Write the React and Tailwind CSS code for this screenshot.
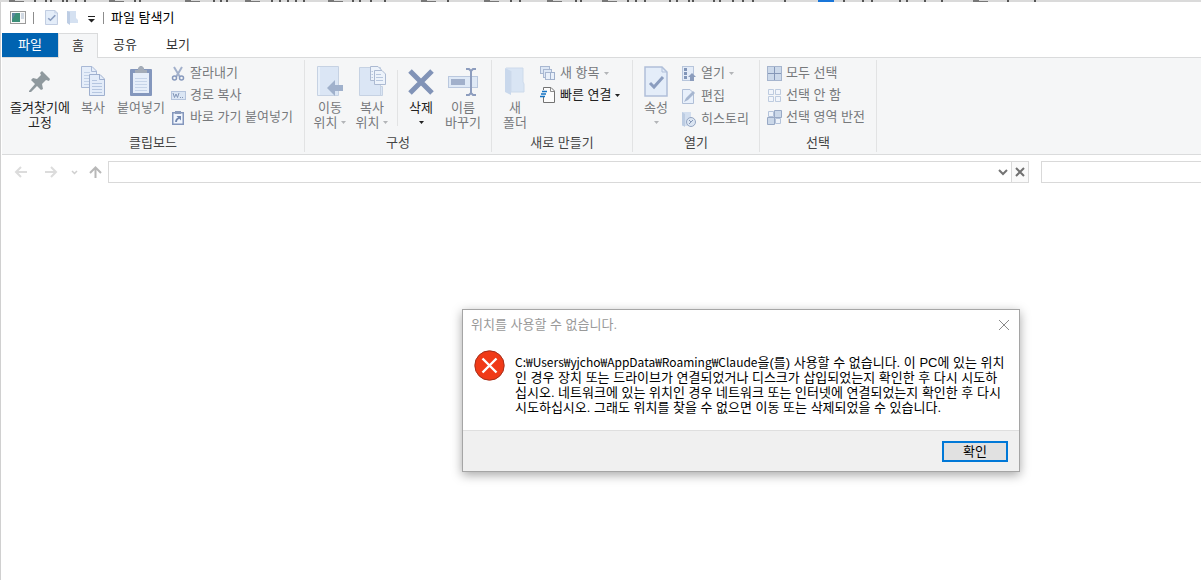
import React, { useState } from 'react';

const Svg = ({ w, h, children }) => (
    <svg width={w} height={h} viewBox={`0 0 ${w} ${h}`} fill="none" className="shrink-0" aria-hidden="true">
        {children}
    </svg>
);

const PinIcon = () => (
    <Svg w={22} h={24}>
        <path d="M13 1L21 9L20 11L17 10L13 14L14 19L12 20L8 16L2 22L0 22L0 21L6 14L2 10L4 8L8 9L12 5L11 3Z" fill="#8f999e" />
    </Svg>
);

const CopyIcon = () => (
    <Svg w={26} h={31}>
        <path d="M1.500 .5H12L16.500 5V21.500H1.500Z" fill="#e6eefa" stroke="#a9b9d6" />
        <path d="M11.500 1V5.500H16" stroke="#a9b9d6" />
        <path d="M4 6.500H10M4 9.500H14M4 12.500H14M4 15.500H14M4 18.500H14" stroke="#c3d2e8" />
        <path d="M9.500 8.500H20L24.500 13V29.500H9.500Z" fill="#e3ecf9" stroke="#9fb0cf" />
        <path d="M19.500 9V13.500H24" stroke="#9fb0cf" />
        <path d="M12 14.500H17M12 17.500H22M12 20.500H22M12 23.500H22M12 26.500H22" stroke="#b5c6e0" />
    </Svg>
);

const PasteIcon = () => (
    <Svg w={22} h={31}>
        <rect x="0" y="3" width="22" height="27" rx="1" fill="#8497bd" />
        <rect x="3" y="7" width="16" height="20" fill="#e6eefa" />
        <path d="M5 12.500H17M5 15.500H17M5 18.500H17M5 21.500H17M5 24.500H17" stroke="#c6d4e9" />
        <path d="M5 4H8V2L10 0H12L14 2V4H17V7H5Z" fill="#a4acb8" />
    </Svg>
);

const CutIcon = () => (
    <Svg w={14} h={15}>
        <path d="M3 1L9 11M11 1L5 11" stroke="#a2b0cb" strokeWidth="2" />
        <circle cx="3.500" cy="12" r="2" stroke="#8799bd" strokeWidth="1.500" />
        <circle cx="10.500" cy="12" r="2" stroke="#8799bd" strokeWidth="1.500" />
    </Svg>
);

const PathIcon = () => (
    <Svg w={15} h={9}>
        <rect x=".5" y=".5" width="14" height="8" fill="#dbe6f4" stroke="#b5c4dc" />
        <path d="M2 2L3.500 6.500L5 3L6.500 6.500L8 2M9 6.500H10M11 6.500H12" stroke="#8497b8" />
    </Svg>
);

const ShortcutIcon = () => (
    <Svg w={12} h={15}>
        <rect x=".75" y="2.750" width="10.500" height="11.500" fill="#f1f6fd" stroke="#8497bd" strokeWidth="1.500" />
        <path d="M3 1H9V4H3Z" fill="#8d9dbd" />
        <path d="M4 12Q4 9 7 8" stroke="#7287b0" strokeWidth="1.800" />
        <path d="M4.500 6H9V10.500Z" fill="#7287b0" />
    </Svg>
);

const MoveToIcon = () => (
    <Svg w={28} h={31}>
        <path d="M1.500 .5H22.500V29.500H1.500Z" fill="#dbe6f5" stroke="#c6d2e3" />
        <path d="M3 1V29" stroke="#e8f0fa" strokeWidth="2" />
        <path d="M11 22L19 14V19H27V25H19V30Z" fill="#a0b1cc" />
    </Svg>
);

const CopyToIcon = () => (
    <Svg w={28} h={31}>
        <path d="M1.500 1.500H22.500V20.500H24.500V29.500H1.500Z" fill="#dbe6f5" stroke="#c6d2e3" />
        <path d="M22.500 20V30" stroke="#c6d2e3" />
        <path d="M12.500 .5H20L23.500 4V14.500H12.500Z" fill="#edf3fb" stroke="#acbad2" />
        <path d="M16.500 4.500H24L27.500 8V18.500H16.500Z" fill="#edf3fb" stroke="#acbad2" />
        <path d="M18 8.500H23M18 11.500H25M18 14.500H25M13.500 5.500H15M13.500 8.500H15M13.500 11.500H15" stroke="#b8c7de" />
    </Svg>
);

const DeleteIcon = () => (
    <Svg w={26} h={26}>
        <path d="M2 2L24 24M24 2L2 24" stroke="#8193b7" strokeWidth="5" />
    </Svg>
);

const RenameIcon = () => (
    <Svg w={30} h={28}>
        <rect x=".5" y="8.500" width="29" height="11" fill="#dfe9f6" stroke="#bac8de" />
        <rect x="3" y="11" width="14" height="6" fill="#a1b0cb" />
        <path d="M18 1H21L23 3L25 1H28M18 27H21L23 25L25 27H28M23 3V25" stroke="#8d9dbe" strokeWidth="2" />
    </Svg>
);

const FolderIcon = () => (
    <Svg w={20} h={29}>
        <path d="M1 1H18V15L19 17V25H1Z" fill="#d9e5f4" />
        <path d="M0 1L6 4V28L0 25Z" fill="#c9d8ec" />
        <path d="M6 4V25H19V17L18 15V1H1" stroke="#cddaeb" />
    </Svg>
);

const NewItemIcon = () => (
    <Svg w={16} h={15}>
        <rect x=".5" y=".5" width="9" height="7" fill="#dde7f5" stroke="#a8b7d1" />
        <rect x="3.500" y="3.500" width="8" height="8" fill="#dde7f5" stroke="#a8b7d1" />
        <rect x="5.500" y="6.500" width="5" height="7" fill="#e9f0fa" stroke="#a8b7d1" />
        <rect x="10.500" y="6.500" width="4" height="7" fill="#e9f0fa" stroke="#9fb0cc" />
    </Svg>
);

const EasyAccessIcon = () => (
    <Svg w={16} h={17}>
        <path d="M3.500 .5H11L14.500 4V15.500H3.500Z" fill="#fcfcfc" stroke="#737373" />
        <path d="M10.500 .5V4.500H14.500" stroke="#8b8b8b" />
        <path d="M2 3H5V10H2Z" fill="#f5f6f7" />
        <path d="M2 4.500H7M1 7H6M0 9.500H5" stroke="#1674c4" strokeWidth="1.500" />
    </Svg>
);

const PropertiesIcon = ({ w = 24, h = 31 }) => (
    <svg width={w} height={h} viewBox="0 0 24 31" preserveAspectRatio="none" fill="none" aria-hidden="true">
        <path d="M1 1H18L23 6V30H1Z" fill="#e4edf9" stroke="#b0bfd9" strokeWidth="1.500" />
        <path d="M18 1V6H23" stroke="#b0bfd9" />
        <path d="M6 17L10 21L19 11" stroke="#8b9dbf" strokeWidth="3" />
    </svg>
);

const OpenIcon = () => (
    <Svg w={14} h={15}>
        <rect x=".5" y=".5" width="11" height="14" fill="#e4ecf8" stroke="#b7c5db" />
        <path d="M2 2H5V5H2ZM2 6H5V9H2ZM2 10H5V13H2Z" fill="#8195b8" />
        <path d="M6 11L10 7L14 11H12V15H8V11Z" fill="#8b9cbc" />
    </Svg>
);

const EditIcon = () => (
    <Svg w={14} h={15}>
        <path d="M.5 .5H8L11.500 4V14.500H.5Z" fill="#e8f0fb" stroke="#b0bfd7" />
        <path d="M2 13L4 9L11 2L13 4L6 11Z" fill="#a6b6d0" />
    </Svg>
);

const HistoryIcon = () => (
    <Svg w={14} h={15}>
        <path d="M0 0H9V8H6V14H0Z" fill="#d3dfef" />
        <path d="M0 0L3 2V15L0 13Z" fill="#bccce2" />
        <circle cx="9" cy="10" r="4.500" fill="#dbe5f2" stroke="#94a5c2" />
        <path d="M7 8L9 10L11 8M9 10L7 12" stroke="#8798b7" />
    </Svg>
);

const SelectAllIcon = () => (
    <Svg w={15} h={15}>
        <rect width="15" height="15" fill="#a6b5ce" />
        <path d="M1 1H7V7H1ZM8 1H14V7H8ZM1 8H7V14H1ZM8 8H14V14H8Z" fill="#ccd9ea" />
        <path d="M7.500 1V14M1 7.500H14" stroke="#8698b8" />
    </Svg>
);

const SelectNoneIcon = () => (
    <Svg w={15} h={15}>
        <path d="M1.500 1.500H6.500V6.500H1.500ZM8.500 1.500H13.500V6.500H8.500ZM1.500 8.500H6.500V13.500H1.500ZM8.500 8.500H13.500V13.500H8.500Z" fill="#f1f5fb" stroke="#bdcbdf" />
    </Svg>
);

const InvertIcon = () => (
    <Svg w={15} h={15}>
        <path d="M1.500 1.500H6.500V6.500H1.500ZM8.500 8.500H13.500V13.500H8.500Z" fill="#eef3fa" stroke="#b4c3da" />
        <path d="M7.500 .5H14.500V7.500H7.500ZM.5 7.500H7.500V14.500H.5Z" fill="#cbd8e9" stroke="#98a9c5" />
    </Svg>
);

const Caret = ({ dark }) => (
    <svg width="5" height="3" viewBox="0 0 5 3" className="shrink-0" aria-hidden="true">
        <path d="M0 0H5L2.500 3Z" fill={dark ? '#222' : '#b3b5b8'} />
    </svg>
);

const BigButton = ({ icon, lines, width, caret, dark }) => (
    <button className={`flex flex-col items-center leading-[15px] ${width} ${dark ? 'text-[#222]' : 'text-[#77797c]'}`}>
        <span className="flex h-[34px] items-center justify-center pb-[3px]">{icon}</span>
        {lines.map((line, i) => (
            <span key={line} className="flex items-center gap-1 whitespace-nowrap">
                {line}
                {caret === 'inline' && i === lines.length - 1 && <Caret dark={dark} />}
            </span>
        ))}
        {caret === 'below' && <span className="flex h-[15px] items-center"><Caret dark={dark} /></span>}
    </button>
);

const SmallButton = ({ icon, label, caret, dark }) => (
    <button className={`flex h-[22px] items-center gap-1 whitespace-nowrap ${dark ? 'text-[#222]' : 'text-[#77797c]'}`}>
        <span className="flex w-4 justify-center">{icon}</span>
        {label}
        {caret && <Caret dark={dark} />}
    </button>
);

const Group = ({ title, width, children }) => (
    <section className={`flex shrink-0 flex-col border-r border-[#e2e3e4] ${width}`}>
        <div className="flex h-[75px]">{children}</div>
        <h2 className="text-center leading-[15px] text-[#444]">{title}</h2>
    </section>
);

// Folder tabs of the window behind, only the lowest two rows stay visible
const folderMarks = [9, 109, 185, 245, 328, 421, 484, 547, 602, 973];
const textMarks = [34, 45, 50, 62, 66, 75, 84, 134, 139, 213, 220, 226, 271, 279, 287, 295, 303, 352, 359, 370, 384, 447, 510, 519, 575, 580, 627, 635, 644, 669, 676, 688, 692, 713, 719, 732, 742, 752, 784, 843, 862, 871, 899, 906, 924, 941, 1007, 1034];

const BehindStrip = () => (
    <svg width="100%" height="2" className="block bg-[#dadada]" aria-hidden="true">
        {folderMarks.map((x) => (
            <path key={x} d={`M${x} 0H${x + 6}V1H${x + 15}V2H${x}Z`} fill="#777" />
        ))}
        {textMarks.map((x) => (
            <rect key={x} x={x} y="0" width="2" height="2" fill="#555" />
        ))}
        <rect x="818" y="0" width="16" height="2" fill="#1976d9" />
    </svg>
);

const TitleBar = () => (
    <header className="flex h-[31px] items-center pl-2">
        <Svg w={16} h={13}>
            <rect x=".5" y=".5" width="15" height="12" fill="#fafafa" stroke="#9a9a9a" />
            <rect x="2" y="2" width="8" height="9" fill="#3c8f78" />
            <path d="M2 2H6L2 9Z" fill="#5d87a0" />
            <path d="M11 3H14M11 5H14M11 7H14" stroke="#a7b7cb" />
        </Svg>
        <span className="ml-[7px] h-3 w-px bg-[#8c8c8c]" />
        <button aria-label="속성" className="ml-[11px]"><PropertiesIcon w={13} h={15} /></button>
        <button aria-label="새 폴더" className="ml-[9px]">
            <Svg w={11} h={15}>
                <path d="M0 1H9V8L11 10V13H0Z" fill="#d5e1f1" />
                <path d="M0 1L3 2V15L0 13Z" fill="#bdcde4" />
            </Svg>
        </button>
        <button aria-label="빠른 실행 도구 모음 사용자 지정" className="ml-[10px] pt-1">
            <Svg w={7} h={7}>
                <path d="M0 .5H7" stroke="#222" />
                <path d="M0 3H7L3.500 6.500Z" fill="#222" />
            </Svg>
        </button>
        <span className="ml-2 h-3 w-px bg-[#8c8c8c]" />
        <h1 className="ml-[7px] text-black">파일 탐색기</h1>
    </header>
);

const Tabs = () => (
    <nav className="flex h-6 text-[#333]">
        <button className="w-14 bg-[#0063b1] text-white">파일</button>
        <button className="relative z-10 -mb-px w-10 border border-b-0 border-[#dadbdc] bg-[#f5f6f7]">홈</button>
        <button className="w-[54px]">공유</button>
        <button className="w-[52px]">보기</button>
    </nav>
);

const Ribbon = () => (
    <div className="flex h-[98px] border-y border-[#dadbdc] bg-[#f5f6f7] pt-[2px] pb-[2px]">
        <Group title="클립보드" width="w-[303px]">
            <div className="flex pt-[6px] pl-[6px]">
                <BigButton icon={<PinIcon />} lines={['즐겨찾기에', '고정']} width="w-16" dark />
                <BigButton icon={<CopyIcon />} lines={['복사']} width="w-[42px]" />
                <BigButton icon={<PasteIcon />} lines={['붙여넣기']} width="w-[54px]" />
            </div>
            <div className="ml-[2px] pt-[2px]">
                <SmallButton icon={<CutIcon />} label="잘라내기" />
                <SmallButton icon={<PathIcon />} label="경로 복사" />
                <SmallButton icon={<ShortcutIcon />} label="바로 가기 붙여넣기" />
            </div>
        </Group>
        <Group title="구성" width="w-[187px]">
            <div className="flex pt-[6px] pl-1">
                <BigButton icon={<MoveToIcon />} lines={['이동', '위치']} width="w-[42px]" caret="inline" />
                <BigButton icon={<CopyToIcon />} lines={['복사', '위치']} width="w-[42px]" caret="inline" />
                <span className="mt-1 ml-1 h-14 w-px bg-[#e2e3e4]" />
                <BigButton icon={<DeleteIcon />} lines={['삭제']} width="w-[46px]" caret="below" dark />
                <BigButton icon={<RenameIcon />} lines={['이름', '바꾸기']} width="w-[38px]" />
            </div>
        </Group>
        <Group title="새로 만들기" width="w-[141px]">
            <div className="flex pt-[6px] pl-[2px]">
                <BigButton icon={<FolderIcon />} lines={['새', '폴더']} width="w-[42px]" />
            </div>
            <div className="ml-1 pt-[2px]">
                <SmallButton icon={<NewItemIcon />} label="새 항목" caret />
                <SmallButton icon={<EasyAccessIcon />} label="빠른 연결" caret dark />
            </div>
        </Group>
        <Group title="열기" width="w-[127px]">
            <div className="flex pt-[6px] pl-[2px]">
                <BigButton icon={<PropertiesIcon />} lines={['속성']} width="w-[42px]" caret="below" />
            </div>
            <div className="ml-1 flex flex-col gap-px pt-[2px]">
                <SmallButton icon={<OpenIcon />} label="열기" caret />
                <SmallButton icon={<EditIcon />} label="편집" />
                <SmallButton icon={<HistoryIcon />} label="히스토리" />
            </div>
        </Group>
        <Group title="선택" width="w-[117px]">
            <div className="ml-[6px] pt-[2px]">
                <SmallButton icon={<SelectAllIcon />} label="모두 선택" />
                <SmallButton icon={<SelectNoneIcon />} label="선택 안 함" />
                <SmallButton icon={<InvertIcon />} label="선택 영역 반전" />
            </div>
        </Group>
    </div>
);

const AddressBar = () => {
    const [path, setPath] = useState('');
    const [query, setQuery] = useState('');

    return (
        <div className="flex items-center pt-[6px] pl-[13px]">
            <button aria-label="뒤로">
                <Svg w={14} h={12}>
                    <path d="M13 6H2M7 1L2 6L7 11" stroke="#dcdcdc" strokeWidth="2" />
                </Svg>
            </button>
            <button aria-label="앞으로" className="ml-4">
                <Svg w={14} h={12}>
                    <path d="M1 6H12M7 1L12 6L7 11" stroke="#dcdcdc" strokeWidth="2" />
                </Svg>
            </button>
            <button aria-label="최근 위치" className="ml-[13px]">
                <Svg w={7} h={5}>
                    <path d="M1 1L3.500 3.500L6 1" stroke="#cfcfcf" strokeWidth="1.500" />
                </Svg>
            </button>
            <button aria-label="위로" className="ml-[11px]">
                <Svg w={13} h={13}>
                    <path d="M6.500 12V2M1 7L6.500 1.500L12 7" stroke="#b8b8b8" strokeWidth="2" />
                </Svg>
            </button>
            <div className="ml-[6px] flex h-[22px] flex-1 border border-[#d9d9d9]">
                <input aria-label="주소" value={path} onChange={(e) => setPath(e.target.value)} className="min-w-0 flex-1 px-1 outline-none" />
                <button aria-label="이전 위치" className="flex w-[16px] items-center justify-center">
                    <Svg w={10} h={7}>
                        <path d="M1 1L5 5L9 1" stroke="#747474" strokeWidth="2" />
                    </Svg>
                </button>
                <button aria-label="중지" className="flex w-[17px] items-center justify-center border-l border-[#d9d9d9] bg-[#fafafa]">
                    <Svg w={10} h={10}>
                        <path d="M1 1L9 9M9 1L1 9" stroke="#707070" strokeWidth="2" />
                    </Svg>
                </button>
            </div>
            <input aria-label="검색" value={query} onChange={(e) => setQuery(e.target.value)} className="ml-3 h-[22px] w-40 border border-r-0 border-[#d9d9d9] px-1 outline-none" />
        </div>
    );
};

const ErrorDialog = ({ onClose }) => (
    <div role="alertdialog" aria-labelledby="dialog-title" aria-describedby="dialog-message" className="absolute top-[309px] left-[462px] w-[558px] border border-[#a5a5a5] bg-white shadow-[0_3px_10px_rgba(0,0,0,0.35)]">
        <div className="flex h-[29px] items-center justify-between pr-[9px] pl-2">
            <h2 id="dialog-title" className="text-[#999]">위치를 사용할 수 없습니다.</h2>
            <button aria-label="닫기" onClick={onClose}>
                <Svg w={12} h={12}>
                    <path d="M1 1L11 11M11 1L1 11" stroke="#8a8a8a" />
                </Svg>
            </button>
        </div>
        <div className="flex gap-[10px] pt-[11px] pb-[15px] pl-[11px]">
            <Svg w={31} h={31}>
                <circle cx="15.500" cy="15.500" r="14.700" fill="#f03a17" stroke="#a52f1b" />
                <path d="M8.500 8.500L22.500 22.500M22.500 8.500L8.500 22.500" stroke="#fff" strokeWidth="2.400" />
            </Svg>
            <p id="dialog-message" className="pt-[5px] leading-[15px] whitespace-nowrap text-black">
                <span className="font-['Noto_Sans_CJK_KR',sans-serif] text-xs leading-[0px]">C:₩Users₩yjcho₩AppData₩Roaming₩Claude</span>을(를) 사용할 수 없습니다. 이 PC에 있는 위치<br />
                인 경우 장치 또는 드라이브가 연결되었거나 디스크가 삽입되었는지 확인한 후 다시 시도하<br />
                십시오. 네트워크에 있는 위치인 경우 네트워크 또는 인터넷에 연결되었는지 확인한 후 다시<br />
                시도하십시오. 그래도 위치를 찾을 수 없으면 이동 또는 삭제되었을 수 있습니다.
            </p>
        </div>
        <div className="flex h-[41px] items-center justify-end border-t border-[#dfdfdf] bg-[#f0f0f0] pr-[11px]">
            <button onClick={onClose} className="h-[21px] w-[66px] border-2 border-[#0078d7] bg-[#e1e1e1] leading-[17px] text-black">확인</button>
        </div>
    </div>
);

const App = () => {
    const [open, setOpen] = useState(true);

    return (
        <div className="flex min-h-screen flex-col overflow-hidden bg-white font-['Liberation_Sans','Noto_Sans_CJK_KR',sans-serif] text-[13px]">
            <BehindStrip />
            <main className="flex-1 border-l border-[#d0d0d0]">
                <div className="pl-px">
                    <TitleBar />
                    <Tabs />
                    <Ribbon />
                </div>
                <AddressBar />
            </main>
            {open && <ErrorDialog onClose={() => setOpen(false)} />}
        </div>
    );
};

export default App;
